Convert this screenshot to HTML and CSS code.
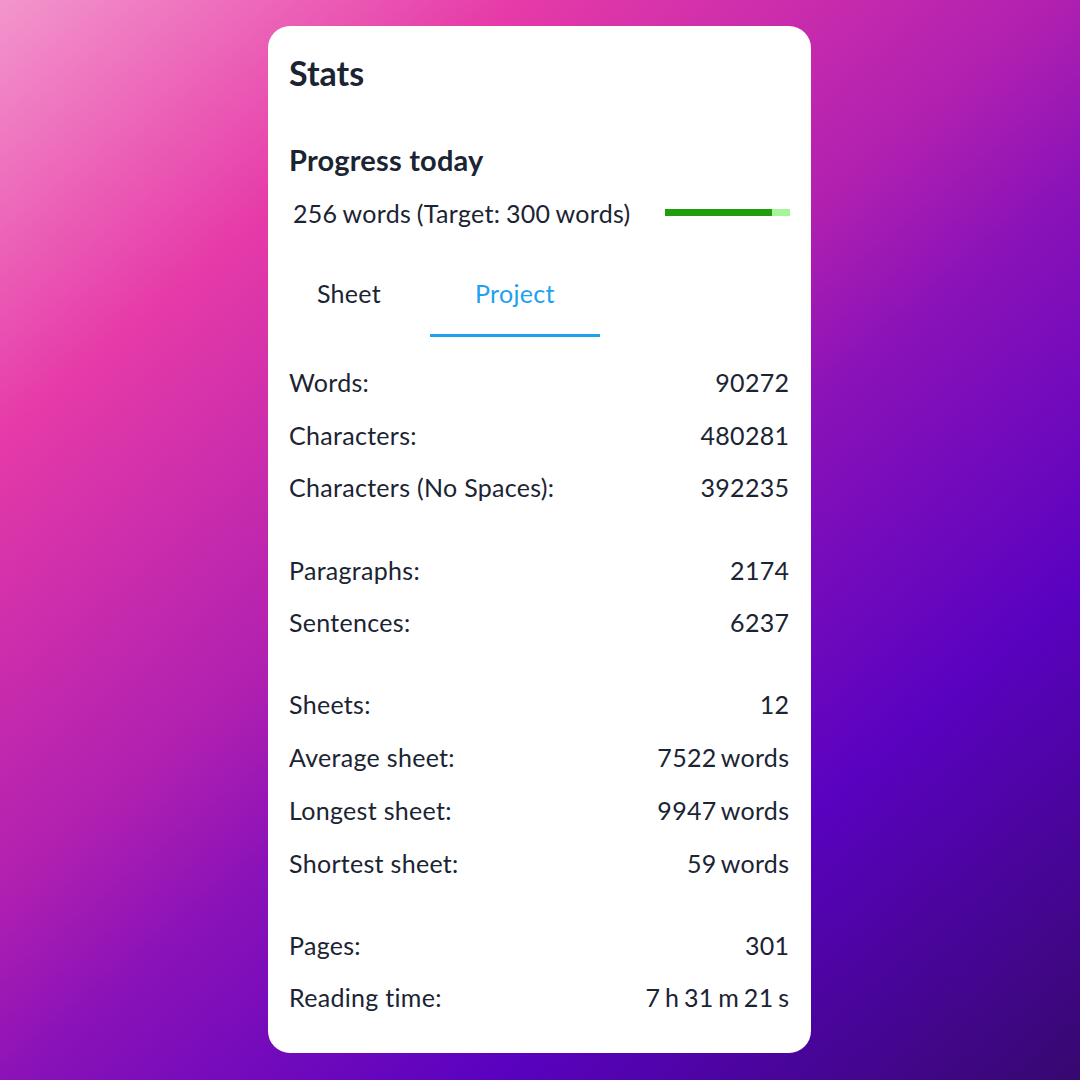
FILE: index.html
```html
<!DOCTYPE html>
<html lang="en">
<head>
<meta charset="utf-8">
<title>Stats</title>
<link rel="stylesheet" href="styles.css">
</head>
<body>
<main class="card">
  <h1 class="title">Stats</h1>
  <h2 class="subtitle">Progress today</h2>
  <div class="progress-row">
    <span class="progress-text">256 words (Target: 300 words)</span>
    <div class="bar"><div class="bar-fill" style="width: 85.33%"></div></div>
  </div>
  <nav class="tabs">
    <div class="tab">Sheet</div>
    <div class="tab active">Project</div>
  </nav>
  <section class="group">
    <div class="row"><span>Words:</span><span class="val">90272</span></div>
    <div class="row"><span>Characters:</span><span class="val">480281</span></div>
    <div class="row"><span>Characters (No Spaces):</span><span class="val">392235</span></div>
  </section>
  <section class="group">
    <div class="row"><span>Paragraphs:</span><span class="val">2174</span></div>
    <div class="row"><span>Sentences:</span><span class="val">6237</span></div>
  </section>
  <section class="group">
    <div class="row"><span>Sheets:</span><span class="val">12</span></div>
    <div class="row"><span>Average sheet:</span><span class="val">7522 words</span></div>
    <div class="row"><span>Longest sheet:</span><span class="val">9947 words</span></div>
    <div class="row"><span>Shortest sheet:</span><span class="val">59 words</span></div>
  </section>
  <section class="group">
    <div class="row"><span>Pages:</span><span class="val">301</span></div>
    <div class="row"><span>Reading time:</span><span class="val">7 h 31 m 21 s</span></div>
  </section>
</main>
</body>
</html>
```
FILE: styles.css
```css
* { box-sizing: border-box; }
html, body { margin: 0; padding: 0; }
body {
  width: 1080px;
  height: 1080px;
  overflow: hidden;
  font-family: Lato, "Noto Sans", sans-serif;
  color: #1b2433;
  background: linear-gradient(140deg, #f396cc 0%, #e63aa8 22%, #b020b0 45%, #8a12b8 55%, #5a02c0 75%, #360870 100%);
  display: flex;
  justify-content: flex-start;
  padding: 26px 0 0 268px;
}
.card {
  width: 543px;
  height: 1027px;
  background: #fff;
  border-radius: 22px;
  padding: 27px 22px 0 21px;
  display: flex;
  flex-direction: column;
}
.title {
  margin: 0;
  font-size: 34px;
  line-height: 40px;
  font-weight: 700;
}
.subtitle {
  margin: 51px 0 0;
  font-size: 29px;
  letter-spacing: 0.2px;
  line-height: 32px;
  font-weight: 700;
}
.progress-row {
  margin-top: 21px;
  display: flex;
  align-items: center;
  justify-content: space-between;
  height: 32px;
  padding-left: 4px;
  margin-right: -1px;
}
.progress-text {
  font-size: 25px;
  letter-spacing: 0.3px;
  word-spacing: -1px;
  line-height: 32px;
}
.bar {
  width: 125px;
  height: 7px;
  background: #a6f59a;
  margin-top: -2px;
}
.bar-fill {
  height: 100%;
  background: #1f9e0d;
}
.tabs {
  margin: 22px 0 0 -21px;
  display: flex;
  height: 86px;
}
.tab {
  min-width: 162px;
  padding: 0 45px;
  display: flex;
  align-items: center;
  justify-content: center;
  font-size: 25px;
  letter-spacing: 0.3px;
  border-bottom: 3px solid transparent;
}
.tab.active {
  color: #1ea1ee;
  border-bottom-color: #1ea1ee;
}
.group {
  margin-top: 29.5px;
}
.group:first-of-type {
  margin-top: 19px;
}
.row {
  display: flex;
  justify-content: space-between;
  font-size: 25px;
  letter-spacing: 0.3px;
  line-height: 52.7px;
  height: 52.7px;
}
.val {
  word-spacing: -2px;
  margin-right: -0.3px;
}
```
